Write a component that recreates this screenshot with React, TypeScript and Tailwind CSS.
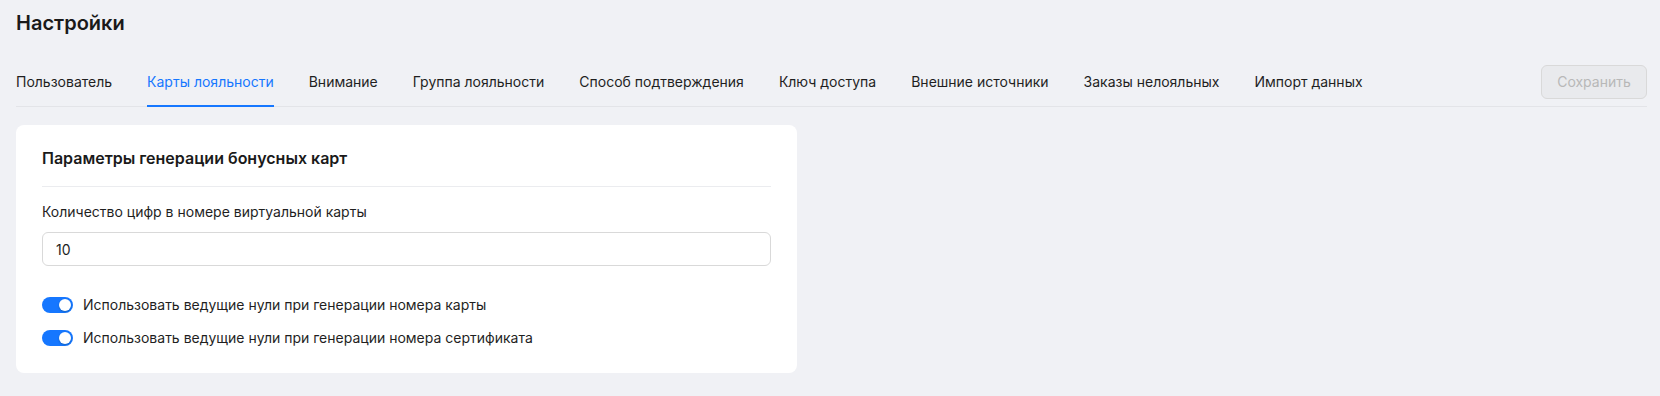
import { useState } from "react"

const tabs = [
  "Пользователь",
  "Карты лояльности",
  "Внимание",
  "Группа лояльности",
  "Способ подтверждения",
  "Ключ доступа",
  "Внешние источники",
  "Заказы нелояльных",
  "Импорт данных",
]

function Toggle({ on, onClick }: { on: boolean; onClick: () => void }) {
  return (
    <button
      onClick={onClick}
      className={`w-[31px] h-4 rounded-full flex items-center px-[2px] shrink-0 ${on ? "bg-[#1677ff] justify-end" : "bg-[#bfbfbf] justify-start"}`}
    >
      <span className="w-3 h-3 rounded-full bg-white shadow-[0_1px_2px_rgba(0,35,11,0.25)]" />
    </button>
  )
}

export default function App() {
  const [active, setActive] = useState(1)
  const [digits, setDigits] = useState("10")
  const [zerosCard, setZerosCard] = useState(true)
  const [zerosCert, setZerosCert] = useState(true)

  return (
    <main className="min-h-screen h-[396px] bg-[#f0f1f5] pl-4 pr-[13px] text-[#1f1f1f] font-['Inter',sans-serif]">
      <h1 className="pt-[9px] text-[20px] leading-7 font-semibold text-[#1a1a1a]">Настройки</h1>

      <div className="mt-[19px] h-[51px] flex items-end border-b border-[#e3e4e8]">
        <div className="flex gap-[35px] flex-1">
          {tabs.map((t, i) => (
            <button
              key={t}
              onClick={() => setActive(i)}
              className={`pb-[12px] -mb-px border-b-2 text-sm leading-[22px] ${i === active ? "border-[#1677ff] text-[#1677ff]" : "border-transparent text-[#1f1f1f]"}`}
            >
              {t}
            </button>
          ))}
        </div>
        <button
          disabled
          className="mb-[7px] w-[106px] h-[34px] rounded-md border border-[#d9d9d9] bg-[#e9eaed] text-sm text-[#b8b8b8]"
        >
          Сохранить
        </button>
      </div>

      <section className="mt-[18px] w-[781px] bg-white rounded-lg px-[26px] pt-[21px] pb-[24px]">
        <h2 className="text-base leading-6 font-semibold text-[#1a1a1a]">Параметры генерации бонусных карт</h2>
        <div className="mt-4 h-px bg-[#ebecef]" />

        <p className="mt-[14px] text-sm leading-[22px]">Количество цифр в номере виртуальной карты</p>
        <input
          value={digits}
          onChange={(e) => setDigits(e.target.value)}
          className="mt-[9px] w-full h-[34px] rounded-md border border-[#d9d9d9] px-[13px] text-sm outline-none"
        />

        <div className="mt-[28px] flex flex-col gap-[11px]">
          <label className="flex items-center gap-[10px] text-sm leading-[22px]">
            <Toggle on={zerosCard} onClick={() => setZerosCard(!zerosCard)} />
            Использовать ведущие нули при генерации номера карты
          </label>
          <label className="flex items-center gap-[10px] text-sm leading-[22px]">
            <Toggle on={zerosCert} onClick={() => setZerosCert(!zerosCert)} />
            Использовать ведущие нули при генерации номера сертификата
          </label>
        </div>
      </section>
    </main>
  )
}
